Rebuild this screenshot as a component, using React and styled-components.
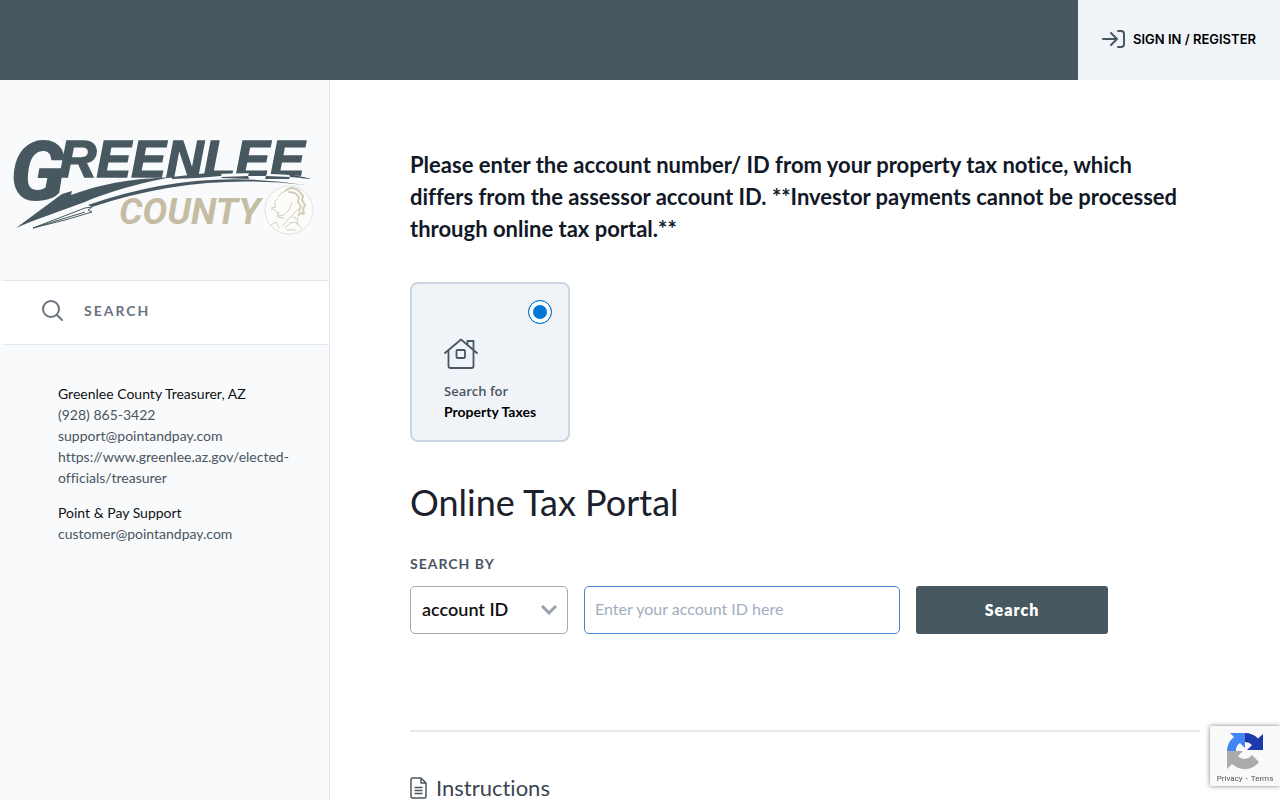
import React, { useState } from 'react';
import styled, { createGlobalStyle } from 'styled-components';

const GlobalStyle = createGlobalStyle`
  * {
    box-sizing: border-box;
  }
  body {
    margin: 0;
    background: #fff;
    color: #1a202c;
    font-family: Lato, 'Open Sans', sans-serif;
    font-variant-ligatures: none;
  }
  h1, h2, p {
    margin: 0;
    font-weight: 400;
  }
`;

const Page = styled.div`
  display: flex;
  flex-direction: column;
  min-height: 100vh;
`;

const Header = styled.header`
  display: flex;
  justify-content: flex-end;
  height: 80px;
  background: #485860;
`;

const SignIn = styled.a`
  display: flex;
  align-items: center;
  gap: 8px;
  padding: 0 24px 2px;
  background: #f0f4f9;
  color: #000;
  font: 600 13px Inter, sans-serif;
  text-decoration: none;
`;

const Body = styled.div`
  display: flex;
  flex: 1;
`;

const Sidebar = styled.aside`
  flex: 0 0 330px;
  border-right: 1px solid #e2e8f0;
  background: #f8fafc;
`;

const LogoBox = styled.div`
  height: 200px;
`;

const NavLink = styled.a`
  display: flex;
  align-items: center;
  gap: 20px;
  height: 65px;
  padding: 0 38px 4px;
  border: solid #e2e8f0;
  border-width: 1px 0;
  border-left: 4px solid #fff;
  background: #fff;
  color: #6b7280;
  font-size: 14px;
  font-weight: 700;
  letter-spacing: 2px;
  text-decoration: none;
`;

const Contact = styled.address`
  display: flex;
  flex-direction: column;
  padding: 38px 40px 14px 58px;
  color: #4a5560;
  font-size: 14px;
  font-style: normal;
  line-height: 21px;

  & + & {
    padding-top: 0;
  }
`;

const ContactName = styled.span`
  color: #111;
`;

const ContactLink = styled.a`
  color: inherit;
  text-decoration: none;
`;

const Main = styled.main`
  flex: 1;
  min-width: 0;
  padding: 69px 80px 0;
`;

const Notice = styled.p`
  color: #111827;
  font-size: 22px;
  font-weight: 700;
  line-height: 32px;
`;

const TypeCard = styled.label`
  display: flex;
  flex-direction: column;
  width: 160px;
  height: 160px;
  margin-top: 37px;
  padding: 16px;
  border: 2px solid #cbd5e0;
  border-radius: 8px;
  background: #f0f4f9;
`;

const Radio = styled.input`
  appearance: none;
  align-self: flex-end;
  width: 24px;
  height: 24px;
  margin: 0;
  border: 1px solid #0078d7;
  border-radius: 50%;
  background: ${(props) => (props.checked ? '#0078d7' : '#fff')};
  box-shadow: inset 0 0 0 4px #fff;
`;

const CardText = styled.span`
  display: flex;
  flex-direction: column;
  padding: 14px 0 0 16px;
  white-space: nowrap;
`;

const CardHint = styled.span`
  margin-top: 11px;
  color: #4a5560;
  font: 600 13px/21px 'Open Sans', sans-serif;
`;

const CardName = styled.span`
  color: #000;
  font-size: 14px;
  font-weight: 700;
  line-height: 20px;
`;

const Title = styled.h1`
  margin-top: 36px;
  color: #1a202c;
  font-size: 36px;
  line-height: 48px;
`;

const SearchForm = styled.form`
  margin-top: 28px;
`;

const FieldLabel = styled.label`
  display: block;
  color: #4a5568;
  font-size: 14px;
  font-weight: 700;
  letter-spacing: 1px;
  line-height: 20px;
`;

const Fields = styled.div`
  display: flex;
  gap: 16px;
  margin-top: 12px;
`;

const SelectWrap = styled.div`
  display: grid;
  flex: 0 0 20%;
  align-items: center;

  & > * {
    grid-area: 1 / 1;
  }
  & > svg {
    justify-self: end;
    margin-right: 11px;
    pointer-events: none;
  }
`;

const Select = styled.select`
  appearance: none;
  width: 100%;
  height: 48px;
  padding: 0 36px 2px 11px;
  border: 1px solid #a0aab4;
  border-radius: 5px;
  background: #fff;
  color: #111;
  font: 600 18px Lato, sans-serif;
`;

const TextInput = styled.input`
  flex: 0 0 40%;
  min-width: 0;
  height: 48px;
  padding: 0 10px 3px;
  border: 1px solid #4285d6;
  border-radius: 5px;
  outline: none;
  font: 16px Lato, sans-serif;

  &::placeholder {
    color: #a0aec0;
  }
`;

const SubmitButton = styled.button`
  width: 192px;
  height: 48px;
  padding-bottom: 3px;
  border: 0;
  border-radius: 3px;
  background: #485860;
  color: #fff;
  font: 800 16px Lato, sans-serif;
  letter-spacing: 1px;
`;

const Divider = styled.hr`
  height: 2px;
  margin: 96px 0 0;
  border: 0;
  background: #e5e7eb;
`;

const SubTitle = styled.h2`
  display: flex;
  align-items: center;
  gap: 9px;
  margin-top: 44px;
  color: #3b4552;
  font-size: 22px;
  line-height: 24px;
`;

const Badge = styled.div`
  position: fixed;
  right: 0;
  bottom: 14px;
  display: flex;
  flex-direction: column;
  align-items: center;
  width: 70px;
  height: 60px;
  padding-top: 5px;
  border-radius: 2px 0 0 2px;
  background: #f9f9f9;
  box-shadow: 0 0 5px #808080;
`;

const BadgeLinks = styled.div`
  display: flex;
  gap: 3px;
  color: #555;
  font: 8px/15px Roboto, sans-serif;

  a {
    color: inherit;
    text-decoration: none;
  }
`;

function Logo() {
  return (
    <svg width="329" height="200" viewBox="0 80 329 200" role="img" aria-label="Greenlee County">
      <g fill="#485860" fontStyle="italic" fontWeight="900">
        <text x="10" y="200" fontFamily="Roboto, sans-serif" fontSize="84">G</text>
        <text
          x="59"
          y="177"
          fontFamily="Liberation Sans, sans-serif"
          fontSize="52"
          stroke="#485860"
          strokeWidth="1.500"
        >
          REENLEE
        </text>
      </g>
      {/* white road cut under the letters */}
      <path d="M160 180Q230 168 313 177L303 181Q225 174 165 182Z" fill="#f8fafc" />
      <path
        d="M16 228L62 194L72 191L71 195C115 179 145 179 172 177C150 181 115 189 85 202C58 212 36 219 16 228Z"
        fill="#485860"
      />
      <path
        d="M172 177L198 174L197 178L172 179ZM198 174L222 172L221 176L197 178ZM222 177L248 176L249 179L221 178ZM249 173L267 173L266 176L248 176ZM266 176L290 177L289 179L265 179ZM289 174L313 179L290 177Z"
        fill="#485860"
      />
      <path d="M88 205Q196 167 305 185Q196 172 92 207Z" fill="#485860" />
      <path
        d="M33 228L85 208L92 207L88 210L92 212L65 220L33 228L85 212"
        fill="none"
        stroke="#485860"
      />
      <text
        x="119"
        y="224"
        fill="#c4bda4"
        fontFamily="Roboto, sans-serif"
        fontSize="37"
        fontStyle="italic"
        fontWeight="700"
      >
        COUNTY
      </text>
      <circle cx="289" cy="210" r="24" fill="#fcfcfb" stroke="#e6e3da" />
      <g fill="none" stroke="#d3cdb9" strokeLinecap="round" strokeLinejoin="round">
        <path d="M278 197q3-5 8-6M277 199q-4 4-1 8l-5 1 5 3 3 5 5-1 5-5 3-7M279 212l-2 5 7 1M271 225l5-3 3 6" />
        <path d="M283 226l4-6 6-5 4-5M285 228l5-5 6-1 5 6M293 217l5 2-1 5M287 230h9" />
        <path
          d="M286 190l5-2 5 1 4 3 3 4-1 4 3 5-2 4 1 5-4-1-2 3M289 192l6 1 4 4-1 5 3 4-2 5"
          strokeDasharray="3 1"
          strokeWidth="2"
        />
      </g>
    </svg>
  );
}

function SignInIcon() {
  return (
    <svg width="23" height="18" viewBox="0 0 23 18" fill="none" stroke="#485860" strokeWidth="2" strokeLinecap="round" strokeLinejoin="round">
      <path d="M1 9h14M9 3l6 6-6 6M16 1h3q3 0 3 3v10q0 3-3 3h-3" />
    </svg>
  );
}

function SearchIcon() {
  return (
    <svg width="22" height="22" viewBox="0 0 22 22" fill="none" stroke="#6b7280" strokeWidth="2" strokeLinecap="round">
      <circle cx="9" cy="9" r="8" />
      <path d="M15 15l5 5" />
    </svg>
  );
}

function HouseIcon() {
  return (
    <svg width="34" height="32" viewBox="0 0 34 32" fill="none" stroke="#485860" strokeWidth="1.8" strokeLinecap="round" strokeLinejoin="round">
      <path d="M1 15L17 1.500 33 15M4.500 13v15q0 2 2 2h21q2 0 2-2V3h-6v4" />
      <rect x="12.500" y="12" width="8.500" height="8" rx="1" />
    </svg>
  );
}

function DocumentIcon() {
  return (
    <svg width="17" height="22" viewBox="0 0 17 22" fill="none" stroke="#485860" strokeWidth="1.500" strokeLinejoin="round">
      <path d="M2.500 1H11l5 5v13.500q0 1.500-1.500 1.500h-12Q1 21 1 19.500v-17Q1 1 2.500 1zM11 1v5h5M4.500 10.500h8M4.500 13.500h8M4.500 16.500h8" />
    </svg>
  );
}

function RecaptchaIcon() {
  return (
    <svg width="40" height="40" viewBox="0 0 40 40">
      <path d="M20 2A18 18 0 0 1 33 7.500L38 3V19H22L27 14A9 9 0 0 0 20 11Z" fill="#1c3aa9" />
      <path d="M20 2H5L9 6A18 18 0 0 0 2 20H11A9 9 0 0 1 15 12L20 17Z" fill="#4285f4" />
      <path d="M2 20H18L13 25A9 9 0 0 0 27 24L34 31A18 18 0 0 1 7 33L2 38Z" fill="#ababab" />
    </svg>
  );
}

function App() {
  const [accountId, setAccountId] = useState('');
  return (
    <Page>
      <GlobalStyle />
      <Header>
        <SignIn href="#signin">
          <SignInIcon />
          SIGN IN / REGISTER
        </SignIn>
      </Header>
      <Body>
        <Sidebar>
          <LogoBox><Logo /></LogoBox>
          <NavLink href="#search">
            <SearchIcon />
            SEARCH
          </NavLink>
          <Contact>
            <ContactName>Greenlee County Treasurer, AZ</ContactName>
            <span>(928) 865-3422</span>
            <ContactLink href="mailto:support@pointandpay.com">support@pointandpay.com</ContactLink>
            <ContactLink href="https://www.greenlee.az.gov/elected-officials/treasurer">
              https://www.greenlee.az.gov/elected-officials/treasurer
            </ContactLink>
          </Contact>
          <Contact>
            <ContactName>Point &amp; Pay Support</ContactName>
            <ContactLink href="mailto:customer@pointandpay.com">customer@pointandpay.com</ContactLink>
          </Contact>
        </Sidebar>
        <Main>
          <Notice>
            Please enter the account number/ ID from your property tax notice, which differs from
            the assessor account ID. **Investor payments cannot be processed through online tax
            portal.**
          </Notice>
          <TypeCard>
            <Radio type="radio" name="searchType" checked readOnly />
            <CardText>
              <HouseIcon />
              <CardHint>Search for</CardHint>
              <CardName>Property Taxes</CardName>
            </CardText>
          </TypeCard>
          <Title>Online Tax Portal</Title>
          <SearchForm onSubmit={(e) => e.preventDefault()}>
            <FieldLabel htmlFor="searchBy">SEARCH BY</FieldLabel>
            <Fields>
              <SelectWrap>
                <Select id="searchBy">
                  <option>account ID</option>
                </Select>
                <svg width="16" height="10" viewBox="0 0 16 10" fill="none" stroke="#98a1ab" strokeWidth="3">
                  <path d="M1 1l7 7 7-7" />
                </svg>
              </SelectWrap>
              <TextInput
                aria-label="Account ID"
                placeholder="Enter your account ID here"
                value={accountId}
                onChange={(e) => setAccountId(e.target.value)}
              />
              <SubmitButton type="submit">Search</SubmitButton>
            </Fields>
          </SearchForm>
          <Divider />
          <SubTitle>
            <DocumentIcon />
            Instructions
          </SubTitle>
        </Main>
      </Body>
      <Badge>
        <RecaptchaIcon />
        <BadgeLinks>
          <a href="#privacy">Privacy</a>
          <span>-</span>
          <a href="#terms">Terms</a>
        </BadgeLinks>
      </Badge>
    </Page>
  );
}

export default App;
